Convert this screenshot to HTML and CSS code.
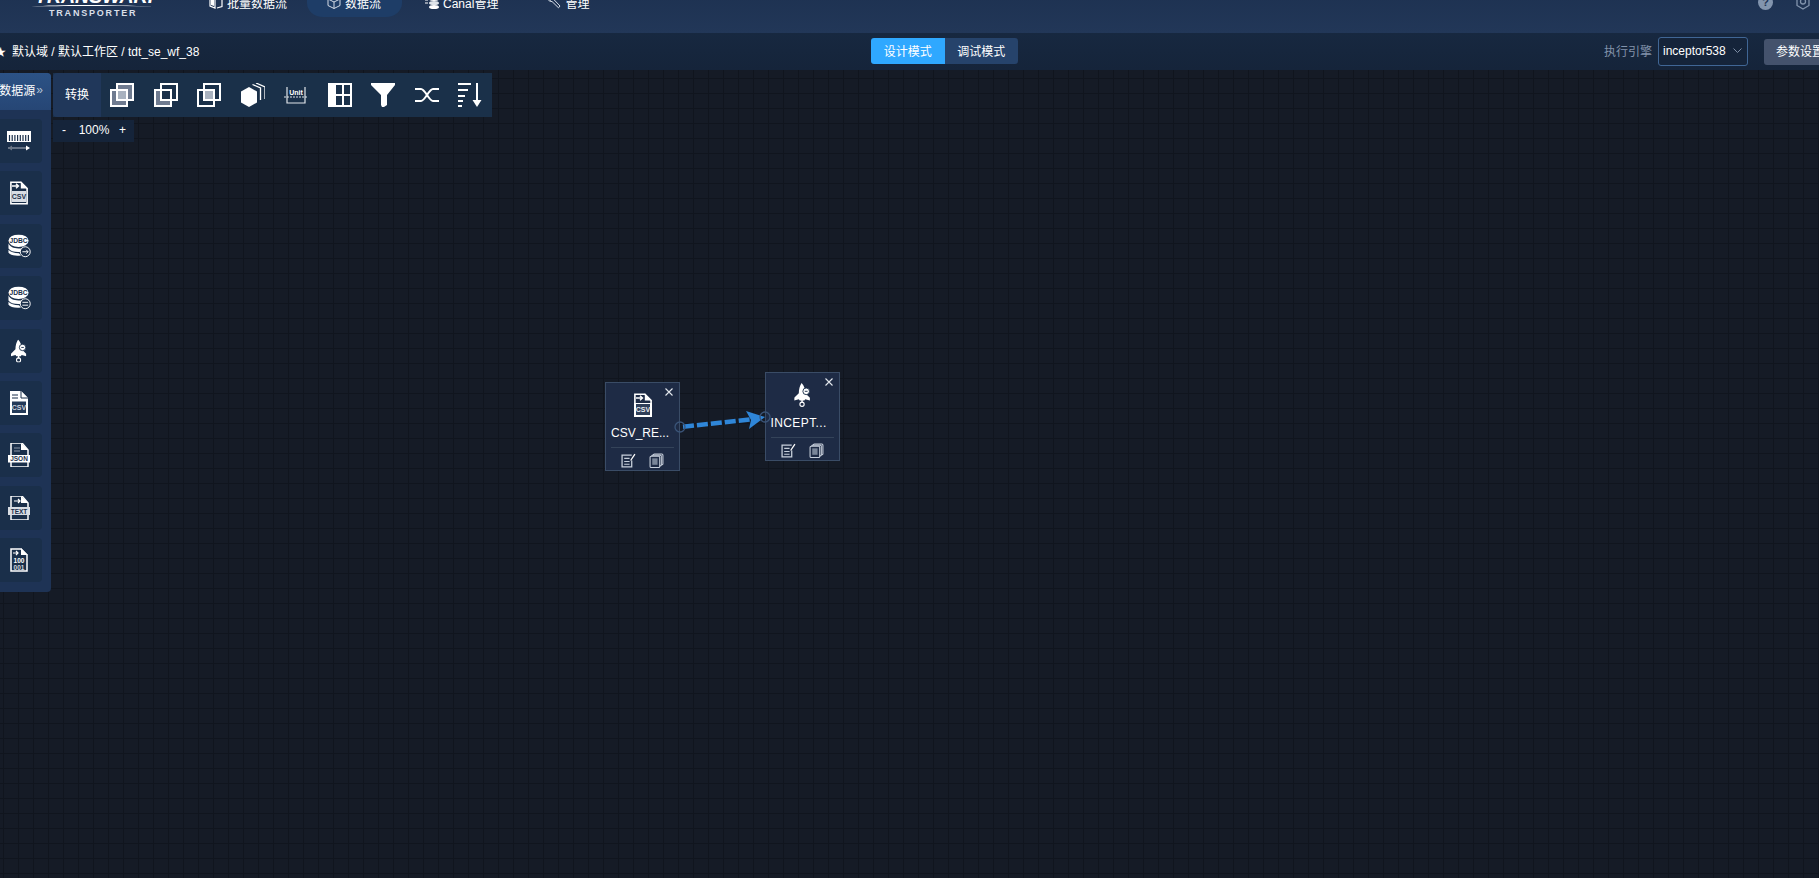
FILE: index.html
```html
<!DOCTYPE html>
<html lang="zh-CN">
<head>
<meta charset="utf-8">
<title>tdt_se_wf_38</title>
<link rel="stylesheet" href="styles.css">
</head>
<body>
<svg class="defs" width="0" height="0" aria-hidden="true">
  <defs>
    <symbol id="i-file" viewBox="0 0 20 26">
      <path d="M1 1h11l7 7v17H1z" fill="none" stroke="#fff" stroke-width="1.800"/>
      <path d="M12 0l8 8h-8z" fill="#fff"/>
    </symbol>
    <symbol id="i-db" viewBox="0 0 24 24">
      <ellipse cx="11" cy="6.500" rx="10.500" ry="6.500" fill="#fff"/>
      <path d="M.5 9.500c2 3.500 5 5 10.500 5 3 0 4 0 6-1l-3 4.500c-6 .8-11.500-.5-13.500-3.500zM.5 16c2 2.500 6 3.500 11 3.500l2 2.300c-6 .8-11-.3-13-2.800z" fill="#fff"/>
      <text x="11" y="9.200" class="svg-t" font-size="7" fill="#1a2f4a">JDBC</text>
    </symbol>
    <symbol id="i-rocket" viewBox="0 0 18 26">
      <path d="M8 0c3 3 4 7 4 11l5 5v3l-5-1.500-1 1.500H6l-1-1.500L0 19v-3l5-5C5 7 6 3 8 0z" fill="#fff"/>
      <circle cx="13" cy="9" r="3.600" fill="#fff" stroke="#1a2f4a" stroke-width="1"/>
      <path d="M11.500 9h3" stroke="#1a2f4a" stroke-width="1"/>
      <circle cx="8.500" cy="23" r="2.300" fill="none" stroke="#fff" stroke-width="1.200"/>
      <path d="M8.500 18.500v3" stroke="#fff" stroke-width="1.500"/>
    </symbol>
    <symbol id="i-edit" viewBox="0 0 14 14">
      <path d="M10 2H1v11h9V7" fill="none" stroke="#c7cfdb" stroke-width="1.200"/>
      <path d="M3 5h5M3 8h5M3 10.500h5" stroke="#c7cfdb" stroke-width="1"/>
      <path d="M9 7l4-6" stroke="#fff" stroke-width="1.200"/>
    </symbol>
    <symbol id="i-copy" viewBox="0 0 14 14">
      <rect x="4" y="1" width="9" height="10" rx="1" fill="none" stroke="#c7cfdb"/>
      <rect x="2.500" y="2" width="9" height="10" rx="1" fill="#1e2b45" stroke="#c7cfdb"/>
      <rect x="1" y="3" width="9" height="10.500" rx="1" fill="#1e2b45" stroke="#c7cfdb"/>
      <rect x="3" y="5" width="5" height="6" fill="#7a8699"/>
    </symbol>
    <symbol id="i-close" viewBox="0 0 8 8">
      <path d="M.5 .5l7 7M7.500 .5l-7 7" stroke="#e4e8ee" stroke-width="1.100"/>
    </symbol>
  </defs>
</svg>

<header class="topbar">
  <div class="logo">
    <span class="logo-word">TRANSWARP</span>
    <svg class="logo-mark" width="126" height="7" viewBox="0 0 126 7"><path d="M0 6.600C30 4.500 70 4.500 126 6.600 80 5.800 30 5.800 0 6.600z" fill="#fff"/></svg>
    <span class="logo-sub">TRANSPORTER</span>
  </div>
  <nav class="nav">
    <a class="nav-item">
      <svg width="14" height="14" viewBox="0 0 14 14"><path d="M1 3l5-2v12l-5-2zM8 2l5 1.500v8L8 13" fill="none" stroke="#fff" stroke-width="1.200"/><path d="M2 4l3-1v8l-3-1z" fill="#fff"/></svg>
      <span>批量数据流</span>
    </a>
    <a class="nav-item active">
      <svg width="14" height="14" viewBox="0 0 14 14"><path d="M7 1l6 3v6.500L7 13.500 1 10.500V4zM1 4l6 3 6-3M7 7v6.500" fill="none" stroke="#d5dce6" stroke-width="1"/></svg>
      <span>数据流</span>
    </a>
    <a class="nav-item wide">
      <svg width="14" height="14" viewBox="0 0 14 14"><ellipse cx="9" cy="4" rx="5" ry="2" fill="#fff"/><ellipse cx="9" cy="8" rx="5" ry="2" fill="#dfe4ea"/><ellipse cx="9" cy="12" rx="5" ry="2" fill="#fff"/><path d="M0 2h3M0 5h3M0 8h3" stroke="#fff"/></svg>
      <span>Canal管理</span>
    </a>
    <a class="nav-item wide last">
      <svg width="14" height="14" viewBox="0 0 14 14"><path d="M1 3l2.500 2.500L5 4 3 1.500C5 .5 7 2 6.800 4.500L13 11l-1.500 1.800L5 6.500C3 7 1 5.500 1 3z" fill="none" stroke="#d5dce6" stroke-width="1"/></svg>
      <span>管理</span>
    </a>
  </nav>
  <div class="top-icons">
    <span class="help">?</span>
    <svg width="16" height="18" viewBox="0 0 16 18"><path d="M8 1l6 3.500v8L8 16l-6-3.500v-8z" fill="none" stroke="#8294ad" stroke-width="1.300"/><circle cx="8" cy="8.500" r="2.500" fill="none" stroke="#8294ad" stroke-width="1.300"/></svg>
  </div>
</header>

<div class="subbar">
  <div class="crumbs"><span class="star">★</span><span>默认域 / 默认工作区 / tdt_se_wf_38</span></div>
  <div class="mode">
    <button class="mode-btn on">设计模式</button>
    <button class="mode-btn">调试模式</button>
  </div>
  <div class="engine">
    <span class="engine-label">执行引擎</span>
    <div class="select"><span>inceptor538</span><svg width="9" height="6" viewBox="0 0 9 6"><path d="M.5 .5l4 4 4-4" fill="none" stroke="#7e8ea6"/></svg></div>
    <button class="params">参数设置</button>
  </div>
</div>

<main class="canvas">
  <aside class="source-panel">
    <div class="source-title">数据源<span class="chev">»</span></div>
    <ul class="source-list">
      <li class="tile">
        <svg width="24" height="20" viewBox="0 0 24 20"><path d="M0 0h24v11H0z" fill="#fff"/><path d="M2.500 4v6M5.200 4v6M7.900 4v6M10.600 4v6M13.300 4v6M16 4v6M18.700 4v6M21.400 4v6" stroke="#1a2f4a" stroke-width="1.200"/><path d="M1 17h21" stroke="#7f8a9a" stroke-width="1.500"/><path d="M5 14.500L1 17l4 2.500z" fill="#6b7686"/><path d="M19 14.500l4 2.500-4 2.500z" fill="#fff"/></svg>
      </li>
      <li class="tile">
        <svg width="18" height="24" viewBox="0 0 18 24"><use href="#i-file" width="18" height="24"/><path d="M2 5h6M6 2.800L8.500 5 6 7.200" fill="none" stroke="#fff" stroke-width="1.400"/><rect x="2" y="10" width="14" height="11" fill="#d7dce3"/><text x="9" y="18" class="svg-t" font-size="7" fill="#1a2f4a">CSV</text></svg>
      </li>
      <li class="tile">
        <svg width="23" height="24" viewBox="0 0 24 24"><use href="#i-db" width="24" height="24"/><circle cx="18" cy="18" r="5.200" fill="#1a2f4a" stroke="#fff"/><path d="M15 18h6M19 16l2 2-2 2" fill="none" stroke="#fff"/></svg>
      </li>
      <li class="tile">
        <svg width="23" height="24" viewBox="0 0 24 24"><use href="#i-db" width="24" height="24"/><circle cx="18" cy="18" r="5.200" fill="#1a2f4a" stroke="#fff"/><path d="M15 16.500h6M15 19.500h6" fill="none" stroke="#fff"/></svg>
      </li>
      <li class="tile"><svg width="16" height="24" viewBox="0 0 18 26"><use href="#i-rocket" width="18" height="26"/></svg></li>
      <li class="tile">
        <svg width="18" height="24" viewBox="0 0 18 24"><path d="M0 0h11l7 7v17H0z" fill="#fff"/><path d="M2 4h6M2 7h6" stroke="#1a2f4a" stroke-width="1.200"/><path d="M11 0v7h7" fill="#fff" stroke="#1a2f4a"/><rect x="2" y="10.500" width="14" height="11.500" fill="#243a58"/><text x="9" y="19" class="svg-t" font-size="7" fill="#ccd3dc">CSV</text></svg>
      </li>
      <li class="tile">
        <svg width="22" height="24" viewBox="0 0 22 24"><path d="M3 0h11l6 7v17H3z" fill="#1a2f4a" stroke="#fff" stroke-width="1.500"/><path d="M13 0l7 7h-7z" fill="#fff"/><path d="M6 5h6M6 8h6" stroke="#8a96a6"/><rect x="0" y="12" width="22" height="7.500" fill="#fff"/><text x="11" y="18.200" class="svg-t" font-size="6.500" fill="#1a2f4a">JSON</text></svg>
      </li>
      <li class="tile">
        <svg width="22" height="24" viewBox="0 0 22 24"><path d="M3 0h11l6 7v17H3z" fill="#1a2f4a" stroke="#fff" stroke-width="1.500"/><path d="M13 0l7 7h-7z" fill="#fff"/><path d="M6 5h6M10 3l2 2-2 2" fill="none" stroke="#fff" stroke-width="1.200"/><rect x="0" y="11" width="22" height="8" fill="#d8dde4"/><text x="11" y="17.500" class="svg-t" font-size="6.500" fill="#1a2f4a">TEXT</text></svg>
      </li>
      <li class="tile">
        <svg width="18" height="24" viewBox="0 0 18 24"><path d="M1 1h10l6 6v16H1z" fill="none" stroke="#fff" stroke-width="1.500"/><path d="M11 0l7 7h-7z" fill="#fff"/><path d="M3 5h5M6 3l2 2-2 2" fill="none" stroke="#fff" stroke-width="1.200"/><text x="9" y="15" class="svg-t" font-size="6.500" fill="#fff">100</text><text x="9" y="21.500" class="svg-t" font-size="6.500" fill="#cfd5dd">001</text></svg>
      </li>
    </ul>
  </aside>

  <div class="toolbar">
    <div class="tool-title">转换</div>
    <div class="tools">
      <svg width="24" height="24" viewBox="0 0 24 24"><path d="M8 1h15v15h-7v7H1V8h7z" fill="#6f7b90"/><rect x="8" y="8" width="8" height="8" fill="#a9b2bf"/><g fill="none" stroke="#fff" stroke-width="2"><rect x="1" y="7" width="16" height="16"/><rect x="7" y="1" width="16" height="16"/></g></svg>
      <svg width="24" height="24" viewBox="0 0 24 24"><rect x="1" y="7" width="16" height="16" fill="#6f7b90"/><rect x="7" y="7" width="10" height="10" fill="#1a3049"/><g fill="none" stroke="#fff" stroke-width="2"><rect x="1" y="7" width="16" height="16"/><rect x="7" y="1" width="16" height="16"/></g></svg>
      <svg width="24" height="24" viewBox="0 0 24 24"><rect x="7" y="7" width="10" height="10" fill="#a9b2bf"/><g fill="none" stroke="#fff" stroke-width="2"><rect x="1" y="7" width="16" height="16"/><rect x="7" y="1" width="16" height="16"/></g></svg>
      <svg width="24" height="24" viewBox="0 0 24 24"><path d="M8 4l8 4.500v11L8 24l-8-4.500v-11z" fill="#fff"/><path d="M11.500 1.500l8 3.500v12M15 0l9 4v12" fill="none" stroke="#fff" stroke-width="1.300"/></svg>
      <svg width="24" height="24" viewBox="0 0 24 24"><path d="M3 4v16h18V4" fill="none" stroke="#dfe4ea" stroke-width="1.200"/><path d="M0 14h24" stroke="#dfe4ea" stroke-dasharray="2 1"/><text x="12" y="11.500" class="svg-t" font-size="7" fill="#fff">Unit</text></svg>
      <svg width="24" height="24" viewBox="0 0 24 24"><path fill-rule="evenodd" d="M0 0h24v24H0zM8 2v9h6V2zM16 2v9h6V2zM8 13v9h6v-9zM16 13v9h6v-9z" fill="#fff"/></svg>
      <svg width="24" height="24" viewBox="0 0 24 24"><path d="M0 0h24v2l-8 10v10l-3 2h-2l-1-2V12L0 2z" fill="#fff"/></svg>
      <svg width="24" height="24" viewBox="0 0 24 24"><path d="M0 6h6c4 0 8 12 12 12h6M0 18h6c4 0 8-12 12-12h6" fill="none" stroke="#fff" stroke-width="2"/></svg>
      <svg width="24" height="24" viewBox="0 0 24 24"><path d="M0 1h13M0 7h10M0 13h7M0 18h5M0 23h4" stroke="#fff" stroke-width="2"/><path d="M19 0v20" stroke="#fff" stroke-width="2"/><path d="M14.500 17h9L19 24z" fill="#fff"/></svg>
    </div>
  </div>

  <div class="zoom">
    <span>-</span><span>100%</span><span>+</span>
  </div>

  <article class="node node-csv">
    <svg class="node-close" width="8" height="8"><use href="#i-close" width="8" height="8"/></svg>
    <svg class="node-icon" width="18" height="24" viewBox="0 0 18 24"><use href="#i-file" width="18" height="24"/><path d="M2 5h6M6 2.800L8.500 5 6 7.200" fill="none" stroke="#fff" stroke-width="1.400"/><rect x="0" y="10" width="18" height="14" fill="#fff"/><rect x="2" y="11" width="14" height="11" fill="#2f3e58"/><text x="9" y="19" class="svg-t" font-size="7" fill="#e6eaf0">CSV</text></svg>
    <div class="node-name">CSV_RE...</div>
    <div class="node-actions">
      <svg width="15" height="15"><use href="#i-edit" width="15" height="15"/></svg>
      <svg width="15" height="15"><use href="#i-copy" width="15" height="15"/></svg>
    </div>
  </article>

  <article class="node node-inc">
    <svg class="node-close" width="8" height="8"><use href="#i-close" width="8" height="8"/></svg>
    <svg class="node-icon" width="17" height="24" viewBox="0 0 18 26"><use href="#i-rocket" width="18" height="26"/></svg>
    <div class="node-name">INCEPT...</div>
    <div class="node-actions">
      <svg width="15" height="15"><use href="#i-edit" width="15" height="15"/></svg>
      <svg width="15" height="15"><use href="#i-copy" width="15" height="15"/></svg>
    </div>
  </article>

  <svg class="link" width="100" height="30" viewBox="0 0 100 30">
    <line x1="9" y1="19.700" x2="80" y2="12" stroke="#2f86d8" stroke-width="4.500" stroke-dasharray="11 3"/>
    <path d="M91 10L72 4l5 9-2 9z" fill="#2f86d8"/>
    <circle cx="6" cy="20" r="5" fill="none" stroke="#3a5478" stroke-width="1.300"/>
    <circle cx="91" cy="10" r="5" fill="none" stroke="#3a5478" stroke-width="1.300"/>
  </svg>
</main>
</body>
</html>
```
FILE: styles.css
```css
* { box-sizing: border-box; }
html, body { margin: 0; height: 100%; overflow: hidden; }
body {
  font-family: "Liberation Sans", "Noto Sans CJK SC", sans-serif;
  font-size: 12px;
  color: #fff;
  background: #141a25;
  display: flex;
  flex-direction: column;
}
ul { list-style: none; margin: 0; padding: 0; }
button { font: inherit; border: 0; color: #fff; }
.defs { position: absolute; }
.svg-t { font-family: "Liberation Sans", sans-serif; font-weight: 700; text-anchor: middle; }

.topbar {
  flex: none;
  height: 60px;
  margin-top: -27px;
  display: flex;
  background: linear-gradient(#1b2f4e, #223758);
  position: relative;
}
.logo {
  position: relative;
  width: 189px;
  flex: none;
  overflow: hidden;
}
.logo-word {
  position: absolute;
  left: 35px;
  top: 12px;
  font: italic 700 19.500px "Liberation Sans", sans-serif;
  color: #fff;
  line-height: 22px;
}
.logo-mark { position: absolute; left: 31px; top: 27px; }
.logo-sub {
  position: absolute;
  left: 49px;
  top: 34px;
  font-size: 9px;
  font-weight: 700;
  line-height: 12px;
  letter-spacing: 1.800px;
  color: #d9dfe8;
}
.nav { display: flex; height: 28px; margin-top: 16px; }
.nav-item {
  display: flex;
  align-items: center;
  gap: 4px;
  padding: 0 20px 2px;
  color: #fff;
}
.nav-item svg { flex: none; }
.nav-item.active { padding: 0 21px 2px 20px; background: #1e3d67; border-radius: 0 0 16px 16px / 0 0 14px 14px; }
.nav-item.wide { padding: 0 23px 2px 24px; }
.nav-item.wide svg { margin-left: -1px; }
.nav-item.last { padding-left: 27px; }
.top-icons {
  position: absolute;
  right: 8px;
  top: 20px;
  display: flex;
  align-items: center;
  gap: 22px;
}
.help {
  width: 15px;
  height: 15px;
  border-radius: 50%;
  background: #8294ad;
  color: #1f3557;
  font-weight: 700;
  font-size: 11px;
  line-height: 15px;
  text-align: center;
}

/* sub bar */
.subbar {
  flex: none;
  height: 37px;
  position: relative;
  display: flex;
  align-items: center;
  background: linear-gradient(#172840, #15243a);
}
.crumbs { display: flex; align-items: center; margin-left: -5px; gap: 6px; padding-bottom: 2px; }
.star { font-size: 11px; }
.mode {
  position: absolute;
  left: 871px;
  top: 5px;
  display: flex;
  border-radius: 3px;
  overflow: hidden;
}
.mode-btn {
  width: 73.500px;
  height: 26px;
  padding: 0 0 2px;
  background: #26436b;
}
.mode-btn.on { background: #2fa8ff; }
.engine {
  margin-left: auto;
  margin-right: -60px;
  display: flex;
  align-items: center;
}
.engine-label { color: #8293ab; margin-right: 6px; padding-bottom: 2px; }
.select {
  width: 90px;
  height: 29px;
  padding: 0 5px 2px 4px;
  display: flex;
  align-items: center;
  justify-content: space-between;
  border: 1px solid #406695;
  border-radius: 3px;
  background: #15243a;
}
.params {
  width: 115px;
  height: 26px;
  margin-left: 16px;
  padding: 0 0 2px 12px;
  text-align: left;
  background: #44526c;
  border-radius: 3px;
}

/* canvas */
.canvas {
  flex: 1;
  position: relative;
  overflow: hidden;
  background-color: #151b26;
  background-image:
    linear-gradient(to right, #10151e 1px, transparent 1px),
    linear-gradient(to bottom, #10151e 1px, transparent 1px);
  background-size: 15px 15px;
  background-position: 3px 8px;
}
.source-panel {
  position: absolute;
  left: -4px;
  top: 3px;
  width: 55px;
  height: 519px;
  background: #1e3355;
  border-radius: 0 4px 4px 0;
}
.source-title {
  height: 37px;
  display: flex;
  align-items: center;
  justify-content: center;
  padding: 0 5px 4px 0;
  background: linear-gradient(#2c5285, #264675);
  border-radius: 0 4px 0 0;
}
.chev { color: #b6c3d6; margin-left: 1px; }
.source-list {
  padding: 9px 9px 0 0;
  display: flex;
  flex-direction: column;
  gap: 8.400px;
}
.tile {
  height: 44px;
  display: flex;
  align-items: center;
  justify-content: center;
  background: #1a2f4a;
  border-radius: 4px;
}
.toolbar {
  position: absolute;
  left: 53px;
  top: 3px;
  width: 439px;
  height: 44px;
  display: flex;
  background: #1a3049;
}
.tool-title {
  width: 48px;
  display: flex;
  align-items: center;
  justify-content: center;
  padding-bottom: 4px;
  background: #20375a;
  border-radius: 4px 0 0 4px;
}
.tools {
  display: flex;
  align-items: center;
  gap: 19.500px;
  padding-left: 9px;
}
.zoom {
  position: absolute;
  left: 53px;
  top: 50px;
  width: 81px;
  height: 22px;
  display: flex;
  align-items: center;
  justify-content: space-between;
  padding: 0 8px 2px 9px;
  background: #15243a;
}
.zoom span:nth-child(2) { margin-left: 3px; }
.link { position: absolute; left: 674px; top: 337px; }
.node {
  position: absolute;
  width: 75px;
  height: 89px;
  display: flex;
  flex-direction: column;
  align-items: center;
  padding: 10px 5px 0;
  background: #1e2b45;
  border: 1px solid #3a4c66;
}
.node-csv { left: 605px; top: 312px; }
.node-inc { left: 765px; top: 302px; }
.node-inc .node-name { letter-spacing: .4px; margin-left: -1px; }
.node-close { position: absolute; right: 6px; top: 5px; }
.node-icon { flex: none; }
.node-name {
  margin-top: 8px;
  width: 100%;
  line-height: 16px;
  white-space: nowrap;
}
.node-actions {
  margin-top: 6px;
  padding-top: 5px;
  width: 100%;
  display: flex;
  justify-content: center;
  gap: 13px;
  border-top: 1px solid #344359;
}
```
